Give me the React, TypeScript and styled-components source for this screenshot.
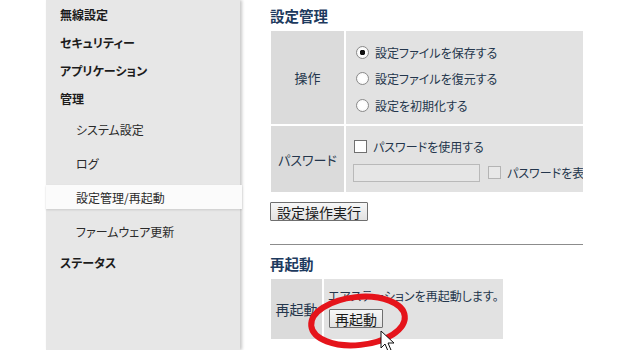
import React from "react"
import styled, { createGlobalStyle } from "styled-components"

const GlobalStyle = createGlobalStyle`
  html, body {
    margin: 0;
    padding: 0;
    background: #fff;
    font-family: "Noto Sans CJK JP", "Noto Sans", sans-serif;
    font-feature-settings: "palt";
  }
`

const Page = styled.div`
  display: flex;
  width: 630px;
  height: 350px;
  overflow: hidden;
`

const Sidebar = styled.nav`
  margin-left: 46px;
  width: 194px;
  height: 350px;
  background: #e7e7e7;
  box-shadow: 2px 0 3px rgba(0, 0, 0, 0.22);
  display: flex;
  flex-direction: column;
`

const NavGroup = styled.div`
  height: 28px;
  display: flex;
  align-items: center;
  padding-left: 14px;
  font-size: 12px;
  font-weight: 700;
  color: #1c1c1c;
`

const NavItem = styled.div<{ $active?: boolean }>`
  height: 24px;
  margin: 5px 0;
  display: flex;
  align-items: center;
  padding-left: 30px;
  font-size: 12px;
  color: #2a2a2a;
  background: ${(p) => (p.$active ? "#fbfbfb" : "transparent")};
  box-shadow: ${(p) => (p.$active ? "0 1px 2px rgba(0,0,0,0.12)" : "none")};
  width: ${(p) => (p.$active ? "196px" : "auto")};
  box-sizing: border-box;
`

const Main = styled.main`
  margin-left: 30px;
  width: 313px;
  overflow: hidden;
  color: #24364c;
`

const Title = styled.h2<{ $top?: number }>`
  margin: ${(p) => p.$top ?? 0}px 0 0;
  height: 30px;
  line-height: 30px;
  font-size: 14.5px;
  font-weight: 700;
  color: #1d3a5e;
`

const Grid = styled.div<{ $cols: string; $width: number }>`
  display: grid;
  grid-template-columns: ${(p) => p.$cols};
  column-gap: 2px;
  row-gap: 2px;
  width: ${(p) => p.$width}px;
  margin-left: 1px;
  background: #fff;
`

const Head = styled.div<{ $size?: number }>`
  background: #dbdbdb;
  display: flex;
  align-items: center;
  justify-content: center;
  font-size: ${(p) => p.$size ?? 13}px;
  color: #24364c;
  white-space: nowrap;
`

const Cell = styled.div<{ $h: number; $pad?: string }>`
  background: #e2e2e2;
  height: ${(p) => p.$h}px;
  padding: ${(p) => p.$pad ?? "0 0 0 10px"};
  box-sizing: border-box;
  display: flex;
  flex-direction: column;
  font-size: 12px;
  white-space: nowrap;
`

const OptionRow = styled.div<{ $indent?: number }>`
  display: flex;
  align-items: center;
  height: 26.5px;
  gap: 6px;
  padding-left: ${(p) => p.$indent ?? 0}px;
  color: #24364c;
`

const Radio = styled.span<{ $on?: boolean }>`
  width: 11px;
  height: 11px;
  border-radius: 50%;
  border: 1px solid #8a8a8a;
  background: radial-gradient(circle, ${(p) => (p.$on ? "#111 0 2.6px" : "#fff 0 2px")}, #fff 3px, #f1f1f1);
  flex: none;
`

const Check = styled.span<{ $disabled?: boolean }>`
  width: 11px;
  height: 11px;
  border: 1px solid ${(p) => (p.$disabled ? "#b4b4b4" : "#707070")};
  background: ${(p) => (p.$disabled ? "#e8e8e8" : "#fff")};
  margin-left: ${(p) => (p.$disabled ? 2 : 0)}px;
  flex: none;
`

const TextInput = styled.input`
  width: 127px;
  height: 18px;
  box-sizing: border-box;
  border: 1px solid #b9b9b9;
  background: #e6e6e6;
  margin: 0;
  padding: 0;
`

const Button = styled.button<{ $pad?: number }>`
  font-family: inherit;
  font-size: 14px;
  color: #1a1a1a;
  height: 19px;
  box-sizing: border-box;
  padding: 0 ${(p) => p.$pad ?? 6}px;
  line-height: 16px;
  border: 1px solid #6f6f6f;
  border-radius: 1px;
  background: linear-gradient(#f7f7f7, #e2e2e2);
  cursor: pointer;
`

const ButtonBar = styled.div`
  display: flex;
  margin: 10px 0 23px;
`

const Divider = styled.hr`
  border: none;
  border-top: 1px solid #8c8c8c;
  margin: 0;
  width: 313px;
`

const Section = styled.section`
  position: relative;
`

const Note = styled.div`
  height: 20px;
  line-height: 20px;
`

const RestartBar = styled.div`
  display: flex;
  margin: 3px 0 0 1px;
`

const Overlay = styled.svg`
  position: absolute;
  left: 36px;
  top: 36px;
  pointer-events: none;
`

export default function App() {
  return (
    <>
      <GlobalStyle />
      <Page>
        <Sidebar>
          <NavGroup>無線設定</NavGroup>
          <NavGroup>セキュリティー</NavGroup>
          <NavGroup>アプリケーション</NavGroup>
          <NavGroup>管理</NavGroup>
          <NavItem>システム設定</NavItem>
          <NavItem>ログ</NavItem>
          <NavItem $active>設定管理/再起動</NavItem>
          <NavItem>ファームウェア更新</NavItem>
          <NavGroup>ステータス</NavGroup>
        </Sidebar>

        <Main>
          <Title $top={1}>設定管理</Title>
          <Grid $cols="73px 1fr" $width={380}>
            <Head>操作</Head>
            <Cell $h={93} $pad="8px 0 0 10px">
              <OptionRow>
                <Radio $on />
                設定ファイルを保存する
              </OptionRow>
              <OptionRow>
                <Radio />
                設定ファイルを復元する
              </OptionRow>
              <OptionRow>
                <Radio />
                設定を初期化する
              </OptionRow>
            </Cell>
            <Head>パスワード</Head>
            <Cell $h={66} $pad="7px 0 0 7px">
              <OptionRow $indent={1}>
                <Check />
                パスワードを使用する
              </OptionRow>
              <OptionRow>
                <TextInput disabled />
                <Check $disabled />
                パスワードを表示
              </OptionRow>
            </Cell>
          </Grid>

          <ButtonBar>
            <Button>設定操作実行</Button>
          </ButtonBar>

          <Divider />

          <Section>
            <Title $top={4}>再起動</Title>
            <Grid $cols="51px 179px" $width={232}>
              <Head $size={14}>再起動</Head>
              <Cell $h={60} $pad="7px 0 0 4px">
                <Note>エアステーションを再起動します。</Note>
                <RestartBar>
                  <Button $pad={5}>再起動</Button>
                </RestartBar>
              </Cell>
            </Grid>
            <Overlay width="120" height="80" viewBox="0 0 120 80">
              <ellipse
                cx="52"
                cy="36"
                rx="47"
                ry="24"
                fill="none"
                stroke="#e5141b"
                strokeWidth="6"
                transform="rotate(-6 52 36)"
              />
              <path
                d="M75 46 L75 63 L79 59 L82 66 L85 65 L82 58 L88 58 Z"
                fill="#fff"
                stroke="#111"
                strokeWidth="1"
                strokeLinejoin="round"
              />
            </Overlay>
          </Section>
        </Main>
      </Page>
    </>
  )
}
